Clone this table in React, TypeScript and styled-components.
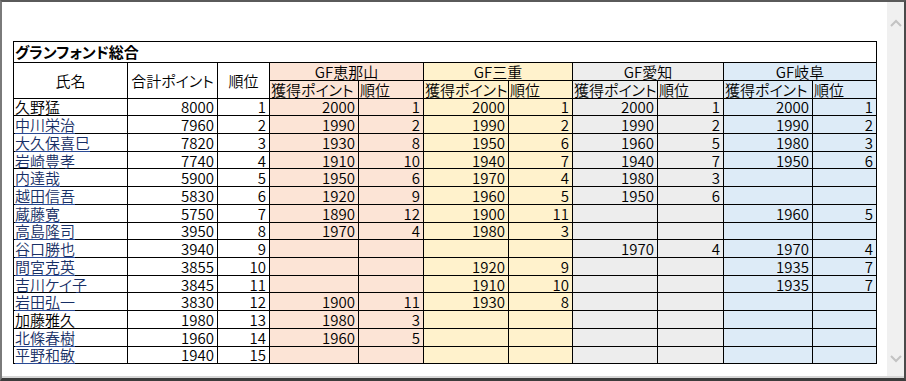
import React from "react";
import styled, { createGlobalStyle } from "styled-components";

const Global = createGlobalStyle`
  html, body { margin: 0; padding: 0; background: #fff; }
  body {
    font-family: "Noto Sans CJK JP", "Noto Sans", sans-serif;
    font-feature-settings: "palt";
    color: #000;
  }
`;

const Frame = styled.div`
  width: 906px;
  height: 381px;
  box-sizing: border-box;
  border-top: 2px solid #5a5a5a;
  border-left: 2px solid #7a7a7a;
  border-right: 2px solid #4a4a4a;
  border-bottom: 3px solid #3c3c3c;
  background: #fff;
  overflow: hidden;
`;

const Inner = styled.div`
  height: 100%;
  box-sizing: border-box;
  border-bottom: 2px solid #d6d6d6;
  display: flex;
`;

const Content = styled.div`
  flex: 1;
  padding: 37px 0 0 11px;
  overflow: hidden;
`;

const Scrollbar = styled.div`
  width: 17px;
  background: #f0f0f0;
  display: flex;
  flex-direction: column;
  justify-content: space-between;
  align-items: center;
  padding: 17px 0 13px;
  box-sizing: border-box;
`;

const Sheet = styled.div`
  display: inline-grid;
  grid-template-columns: 114px 90px 52px 89px 65px 85px 64px 85px 66px 89px 64px;
  grid-template-rows: 21px 18px 18px repeat(15, 17.733px);
  border-top: 1px solid #000;
  border-left: 1px solid #000;
`;

type Align = "left" | "right" | "center";

const Cell = styled.div<{ $bg?: string; $align?: Align; $cols?: number; $rows?: number; $bold?: boolean }>`
  box-sizing: border-box;
  border-right: 1px solid #000;
  border-bottom: 1px solid #000;
  background: ${(p) => p.$bg ?? "#fff"};
  grid-column: span ${(p) => p.$cols ?? 1};
  grid-row: span ${(p) => p.$rows ?? 1};
  display: flex;
  align-items: center;
  justify-content: ${(p) =>
    p.$align === "right" ? "flex-end" : p.$align === "center" ? "center" : "flex-start"};
  padding: ${(p) => (p.$align === "right" ? "0 3px 0 0" : p.$align === "center" ? "0" : "0 0 0 1px")};
  font-size: 15px;
  line-height: 15px;
  font-weight: ${(p) => (p.$bold ? 700 : 350)};
  white-space: nowrap;
`;

const Name = styled.span<{ $link?: boolean }>`
  color: ${(p) => (p.$link ? "#172f66" : "#000")};
  text-decoration: ${(p) => (p.$link ? "underline" : "none")};
  text-decoration-color: #2a4a94;
  text-underline-offset: 2px;
`;

const Chevron = ({ up }: { up?: boolean }) => (
  <svg width="12" height="8" viewBox="0 0 12 8">
    <polyline
      points={up ? "1,7 6,2 11,7" : "1,1 6,6 11,1"}
      fill="none"
      stroke="#c3c3c3"
      strokeWidth="2"
    />
  </svg>
);

const groups = [
  { name: "GF恵那山", bg: "#fce4d6" },
  { name: "GF三重", bg: "#fff2cc" },
  { name: "GF愛知", bg: "#ededed" },
  { name: "GF岐阜", bg: "#ddebf7" },
];

type Res = [number, number] | null;
type Row = { name: string; link: boolean; total: number; rank: number; res: Res[] };

const rows: Row[] = [
  { name: "久野猛", link: false, total: 8000, rank: 1, res: [[2000, 1], [2000, 1], [2000, 1], [2000, 1]] },
  { name: "中川栄治", link: true, total: 7960, rank: 2, res: [[1990, 2], [1990, 2], [1990, 2], [1990, 2]] },
  { name: "大久保喜巳", link: true, total: 7820, rank: 3, res: [[1930, 8], [1950, 6], [1960, 5], [1980, 3]] },
  { name: "岩崎豊孝", link: true, total: 7740, rank: 4, res: [[1910, 10], [1940, 7], [1940, 7], [1950, 6]] },
  { name: "内達哉", link: true, total: 5900, rank: 5, res: [[1950, 6], [1970, 4], [1980, 3], null] },
  { name: "越田信吾", link: true, total: 5830, rank: 6, res: [[1920, 9], [1960, 5], [1950, 6], null] },
  { name: "蔵藤寛", link: true, total: 5750, rank: 7, res: [[1890, 12], [1900, 11], null, [1960, 5]] },
  { name: "高島隆司", link: true, total: 3950, rank: 8, res: [[1970, 4], [1980, 3], null, null] },
  { name: "谷口勝也", link: true, total: 3940, rank: 9, res: [null, null, [1970, 4], [1970, 4]] },
  { name: "間宮克英", link: true, total: 3855, rank: 10, res: [null, [1920, 9], null, [1935, 7]] },
  { name: "吉川ケイ子", link: true, total: 3845, rank: 11, res: [null, [1910, 10], null, [1935, 7]] },
  { name: "岩田弘一", link: true, total: 3830, rank: 12, res: [[1900, 11], [1930, 8], null, null] },
  { name: "加藤雅久", link: false, total: 1980, rank: 13, res: [[1980, 3], null, null, null] },
  { name: "北條春樹", link: true, total: 1960, rank: 14, res: [[1960, 5], null, null, null] },
  { name: "平野和敏", link: true, total: 1940, rank: 15, res: [null, null, null, null] },
];

export default function App() {
  return (
    <>
      <Global />
      <Frame>
        <Inner>
          <Content>
            <Sheet>
              <Cell $cols={11} $bold>グランフォンド総合</Cell>

              <Cell $rows={2} $align="center">氏名</Cell>
              <Cell $rows={2} $align="center">合計ポイント</Cell>
              <Cell $rows={2} $align="center">順位</Cell>
              {groups.map((g) => (
                <Cell key={g.name} $cols={2} $bg={g.bg} $align="center">
                  {g.name}
                </Cell>
              ))}
              {groups.map((g) => (
                <React.Fragment key={g.name + "-sub"}>
                  <Cell $bg={g.bg}>獲得ポイント</Cell>
                  <Cell $bg={g.bg}>順位</Cell>
                </React.Fragment>
              ))}

              {rows.map((r) => (
                <React.Fragment key={r.name}>
                  <Cell>
                    <Name $link={r.link}>{r.name}</Name>
                  </Cell>
                  <Cell $align="right">{r.total}</Cell>
                  <Cell $align="right">{r.rank}</Cell>
                  {r.res.map((v, i) => (
                    <React.Fragment key={i}>
                      <Cell $bg={groups[i].bg} $align="right">{v ? v[0] : ""}</Cell>
                      <Cell $bg={groups[i].bg} $align="right">{v ? v[1] : ""}</Cell>
                    </React.Fragment>
                  ))}
                </React.Fragment>
              ))}
            </Sheet>
          </Content>
          <Scrollbar>
            <Chevron up />
            <Chevron />
          </Scrollbar>
        </Inner>
      </Frame>
    </>
  );
}
